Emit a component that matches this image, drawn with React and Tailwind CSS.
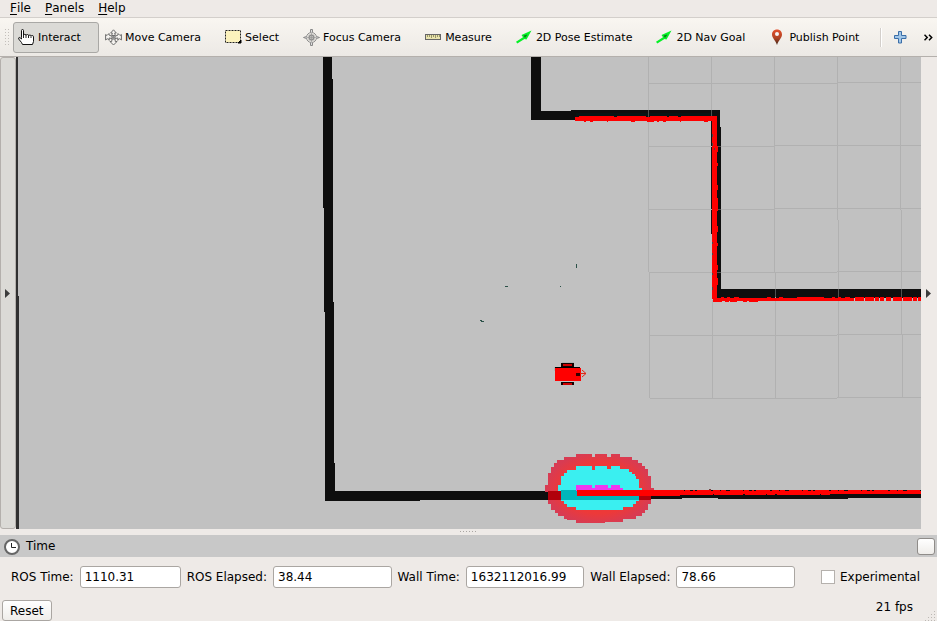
import React from "react";

function HandIcon() {
  return (
    <svg width="17" height="17" viewBox="0 0 17 17" shapeRendering="geometricPrecision">
      <path d="M3.5 8.5V1.5Q3.5.5 4.5.5T5.5 1.5V6.5Q5.5 5.3 6.8 5.3T8 6.5Q8.2 5.5 9.4 5.5T10.6 6.8Q11 6 12 6T13 7.2Q13.3 6.5 14.3 6.5T15.5 7.8V12.5L14.5 15.5H4.5L3.5 13.5L.7 10Q.3 8.4 1.8 8.5L3.5 10Z" fill="#fff" stroke="#111" strokeWidth="1" strokeLinejoin="round" />
      <path d="M5.5 6V9M8 6.5V9M10.5 7V9M13 7.5V9" stroke="#222" strokeWidth="1" />
    </svg>
  );
}

function MoveIcon() {
  return (
    <svg width="17" height="17" viewBox="0 0 17 17">
      <g fill="#f5f3f0" stroke="#6c6c6c" strokeWidth="1" strokeLinejoin="round">
        <path d="M7 10H10L10.3 12.5H12L8.5 16L5 12.5H6.7Z" />
        <path d="M.6 5.5L2 6.5L4 4.5V6L7 7.3V9.5L4 9L4.3 11.3L2.3 9.7L.6 11Z" />
        <path d="M16.400 5.5L15 6.500L13 4.500V6L10 7.300V9.500L13 9L12.700 11.300L14.700 9.700L16.400 11Z" />
        <path d="M8.500 .8L11.300 4H9.700L10.300 6.500H6.700L7.300 4H5.700Z" />
      </g>
      <circle cx="8.500" cy="8.300" r="1.500" fill="#888" />
    </svg>
  );
}

function SelectIcon() {
  return (
    <svg width="17" height="17" viewBox="0 0 17 17">
      <rect x=".5" y="1.5" width="15" height="12" fill="#fcf2bd" stroke="#222" strokeDasharray="2 1" />
      <path d="M16 11V14H13Z" fill="#000" stroke="#000" />
    </svg>
  );
}

function FocusIcon() {
  return (
    <svg width="17" height="17" viewBox="0 0 17 17" fill="none" stroke="#888">
      <circle cx="8.5" cy="8.5" r="5" />
      <circle cx="8.5" cy="8.5" r="2.5" />
      <path d="M8.5 3V14M3 8.5H14M7 5V12M10 5V12M5 7H12M5 10H12" strokeWidth=".6" />
      <path d="M7.5 3.5V.5H9.5V3.5M7.5 13.5V16.5H9.5V13.5M3.5 7.5L.5 8.5L3.5 9.5M13.5 7.5L16.5 8.5L13.5 9.5" fill="#ddd" />
    </svg>
  );
}

function RulerIcon() {
  return (
    <svg width="17" height="17" viewBox="0 0 17 17" shapeRendering="crispEdges">
      <rect x=".5" y="5.5" width="15" height="5" fill="#e9e4ad" stroke="#666" />
      <path d="M2.5 6V8M4.5 6V8M6.5 6V9M8.5 6V8M10.5 6V9M12.5 6V8M14.5 6V8" stroke="#999669" />
    </svg>
  );
}

function ArrowIcon() {
  return (
    <svg width="17" height="17" viewBox="0 0 17 17">
      <path d="M15.5 1.5L5.5 6L7 8.3L0 12.7L1.3 14.5L8.500 10L10.500 10.500Z" fill="#08f028" />
      <path d="M7.500 6.500L11.500 5.500L9 9Z" fill="#087d1b" />
    </svg>
  );
}

function PinIcon() {
  return (
    <svg width="17" height="17" viewBox="0 0 17 17">
      <defs>
        <linearGradient id="pin" x1="0" y1="0" x2="0" y2="1">
          <stop offset="0" stopColor="#e34f2c" />
          <stop offset=".55" stopColor="#b04324" />
          <stop offset="1" stopColor="#3c2416" />
        </linearGradient>
      </defs>
      <path d="M8 .5C4.8.5 3 2.7 3 5.6C3 9 6.4 11.5 8 16C9.6 11.5 13 9 13 5.6C13 2.7 11.2.5 8 .5Z" fill="url(#pin)" />
      <circle cx="8" cy="5" r="2" fill="#f4f4f4" />
    </svg>
  );
}

const tools = [
  ["Interact", HandIcon],
  ["Move Camera", MoveIcon],
  ["Select", SelectIcon],
  ["Focus Camera", FocusIcon],
  ["Measure", RulerIcon],
  ["2D Pose Estimate", ArrowIcon],
  ["2D Nav Goal", ArrowIcon],
  ["Publish Point", PinIcon],
];

function Toolbar() {
  return (
    <div className="flex h-[39px] shrink-0 items-center overflow-hidden border-b border-[#b4b0ac] bg-linear-to-b from-[#f9f6f1] to-[#ece9e5] text-[11px]">
      <svg className="mr-[3px] ml-[5px] shrink-0" width="5" height="17" shapeRendering="crispEdges">
        <path d="M.5 0V17M3.5 0V17" stroke="#c3bfbb" strokeDasharray="1 2" />
      </svg>
      <div className="flex items-center gap-px">
        {tools.map(([name, Icon], i) => (
          <button
            key={name}
            aria-pressed={i === 0}
            className={
              "flex h-[31px] shrink-0 items-center rounded-[3px] border pr-[17px] pl-1 whitespace-nowrap " +
              (i === 0 ? "border-[#a9a8a5] bg-[#dbdad6]" : "border-transparent")
            }
          >
            <span className="mr-1 w-4"><Icon /></span>
            <span className="pt-[2px]">{name}</span>
          </button>
        ))}
      </div>
      <div className="ml-[3px] h-[19px] w-px shrink-0 bg-[#d3cfcb]" />
      <div className="h-[19px] w-px shrink-0 bg-white" />
      <button aria-label="Add tool" className="ml-3 shrink-0">
        <svg width="13" height="13" viewBox="0 0 13 13">
          <path d="M4.5.5H7.5V4.5H12V7.5H7.5V12H4.5V7.5H.5V4.5H4.5Z" fill="#a1c6e8" stroke="#3a6ea8" strokeLinejoin="round" />
        </svg>
      </button>
      <button aria-label="More tools" className="mr-1 ml-auto shrink-0">
        <svg width="9" height="7" viewBox="0 0 9 7" fill="none" stroke="#000" strokeWidth="1.5">
          <path d="M.5.8L3.2 3.5L.5 6.2M5 .8L7.7 3.5L5 6.2" />
        </svg>
      </button>
    </div>
  );
}

function MapView() {
  return (
    <svg className="min-w-0 flex-1 bg-[#c1c1c1]" viewBox="16 57 905 472" preserveAspectRatio="xMidYMid slice" shapeRendering="crispEdges">
      <defs>
        <radialGradient id="inflation" gradientUnits="userSpaceOnUse" cx="238" cy="145" r="160" gradientTransform="translate(0 47) scale(1 .675)">
          <stop offset=".7" stopColor="#ed3939" />
          <stop offset="1" stopColor="#d83b52" />
        </radialGradient>
      </defs>
      <rect x="16" y="57" width="905" height="472" fill="#c1c1c1" />
      <path d="M16 57H18V296H19V529H16Z" fill="#303030" />

      {/* static map walls */}
      <g fill="#0e0e0e">
        <path d="M323 57H332V79H333V302H334V463H335V491H650V490H921V498H848V499H718V498H682V499H650V500H420V501H325V312H324V208H323Z" />
        <path d="M531 57H541V111H571V110H720V127H721V289H921V298H712V234H711V120H531Z" />
      </g>
      <path d="M576 113H713V117H576Z" fill="#081414" />

      {/* one metre grid */}
      <g stroke="#b1b1b1">
        <path d="M648.5 57V272M649.5 272V398M711.5 57V120M712.5 300V398M774.5 57V272M775.5 272V398M837.5 57V220M838.5 220V398M900.5 57V210M901.5 210V334M902.5 334V398" />
        <path d="M649 83.5H837M837 82.5H921M649 146.5H775M775 145.5H921M649 209.5H775M775 208.5H921M649 272.5H837M837 271.5H921M650 335.5H837M837 334.5H921M650 398.5H837M837 397.5H921" />
      </g>
      <path d="M648.5 110V119M711.5 110V119M775.5 289V297M838.5 289V297M901.5 289V297M717 146.5H721M717 209.5H721M717 272.5H721" stroke="#515151" />

      {/* local costmap, drawn in thirds of a pixel */}
      <g transform="translate(520 440) scale(.333333)">
        <path fill="url(#inflation)" d="M168 42H216V51H225V42H261V51H273V42H300V51H336V60H354V69H366V78H375V87H384V108H393V144H402V153H393V192H384V210H375V219H366V228H348V237H309V246H255V249H168V240H141V237H132V228H114V219H105V210H93V192H84V156H75V135H84V99H93V81H102V69H111V60H132V51H168Z" />
        <path fill="#b1000b" d="M84 153H393V180H84Z" />
        <path fill="#3aeff0" d="M168 78H216V90H225V78H261V87H273V78H300V87H327V96H336V102H345V108H348V117H357V144H366V153H357V183H348V192H339V201H309V210H168V201H141V192H132V183H123V153H114V135H123V108H132V99H141V90H168Z" />
        <path fill="#00b7ba" d="M123 150H357V180H123Z" />
        <path fill="#ed38ef" d="M168 135H216V144H225V135H264V144H273V135H300V144H309V153H168Z" />
        <path fill="#f00" d="M171 150H480V167H171Z" />
      </g>

      {/* laser scan */}
      <g fill="none" stroke="#f00">
        <path d="M575 118.500H716" strokeWidth="4" />
        <path d="M579 116.500H716" strokeWidth="1" strokeDasharray="35 3 29 4 17 2 9 3" />
        <path d="M584 121.500H712" strokeWidth="1" strokeDasharray="2 4 3 14 1 23 4 12 7 3" />
        <path d="M714.500 116V299" strokeWidth="5" />
        <path d="M717.500 146V285" strokeDasharray="6 11 3 19 5 8 13 15" />
        <path d="M713 299.500H854" strokeWidth="3" />
        <path d="M855 299H921" strokeWidth="4" strokeDasharray="9 1 9 1 4 1 4 2 5 2" />
        <path d="M713 301.500H759" strokeDasharray="9 3 4 1 7 6 4 2" />
        <path d="M721 297.500H855" strokeDasharray="3 3 3 4 5 28 4 8 4 14 27 8" />
        <path d="M638 492.500H921" strokeWidth="3" />
        <path d="M638 490.500H921" strokeDasharray="14 2 7 1 5 4 13 1 5 3 2 2" />
        <path d="M638 494.500H830" strokeDasharray="21 1 8 2 43 1 29 2" />
      </g>
      <path d="M712.500 134V137M712.500 143V146M714.500 148V150M712.500 242V244M712.500 253V255M712.500 273V275M712.500 287V290" stroke="#5a4040" />
      <path d="M709 489H711V490H709Z" fill="#713c3c" />

      {/* robot */}
      <g>
        <path d="M562 362H574V363H562ZM554 367H555V371H554Z" fill="#aeb4b4" />
        <path d="M561 363H574V367H561ZM561 382H574V385H561Z" fill="#100" />
        <path d="M563 364H572V366H563ZM563 383H572V385H563Z" fill="#c00" />
        <path d="M555 367H580V368H555Z" fill="#000" />
        <path d="M555 368H581V381H555Z" fill="#f00" />
        <path d="M576 373H580V376H576Z" fill="#300" />
        <path d="M580 373.500H586M582 370L586 373.500L582 377" fill="none" stroke="#e12818" shapeRendering="auto" />
      </g>
      <path d="M576 264L577 268M505 286.500H508M560 286.500H561M480 320.500H482M481 321.500H484" stroke="#2b5148" />
    </svg>
  );
}

function TimeField({ id, label, value, width }) {
  return (
    <>
      <label htmlFor={id} className="shrink-0 whitespace-nowrap">{label}</label>
      <input
        id={id}
        readOnly
        defaultValue={value}
        className={"h-[22px] min-w-0 rounded-[3px] border border-[#aaa6a2] bg-white px-1 text-black outline-none " + width}
      />
    </>
  );
}

function TimePanel() {
  return (
    <section>
      <header className="flex h-[22px] items-center bg-[#c8c8c8] pr-[2px] pl-1">
        <svg className="mt-[2px]" width="16" height="16" viewBox="0 0 16 16" fill="none">
          <circle cx="8" cy="8" r="7" fill="#fff" stroke="#666" strokeWidth="2" />
          <path d="M7.500 4V8.500H12" stroke="#222" />
        </svg>
        <h2 className="ml-[6px]">Time</h2>
        <button aria-label="Close panel" className="ml-auto h-[17px] w-[18px] rounded-[3px] border border-[#8f8c89] bg-linear-to-b from-white to-[#efedea]" />
      </header>
      <div className="flex items-center gap-[6px] pt-[9px] pr-[17px] pl-[11px]">
        <TimeField id="ros-time" label="ROS Time:" value="1110.31" width="w-[101px]" />
        <TimeField id="ros-elapsed" label="ROS Elapsed:" value="38.44" width="flex-1" />
        <TimeField id="wall-time" label="Wall Time:" value="1632112016.99" width="flex-1" />
        <TimeField id="wall-elapsed" label="Wall Elapsed:" value="78.66" width="flex-1" />
        <label className="ml-5 flex shrink-0 items-center gap-[5px]">
          <input type="checkbox" className="h-[14px] w-[14px] appearance-none border border-[#b5b1ad] bg-white" />
          Experimental
        </label>
      </div>
      <footer className="relative flex items-start justify-between pt-3 pr-6 pl-[2px]">
        <button className="h-[21px] rounded-[3px] border border-[#aaa6a2] bg-linear-to-b from-white to-[#efedea] px-[7px]">Reset</button>
        <output className="leading-[14px]">21 fps</output>
        <svg className="absolute right-[2px] bottom-0" width="10" height="10" shapeRendering="crispEdges">
          <path d="M9.500 0V10M6.500 3V10M3.500 6V10M.500 9V10" stroke="#bcb8b4" strokeDasharray="1 2" />
        </svg>
      </footer>
    </section>
  );
}

export default function App() {
  return (
    <div className="flex h-screen flex-col overflow-hidden bg-[#eeeae7] font-['DejaVu_Sans',sans-serif] text-[12px] leading-4 text-black">
      <nav className="flex h-[18px] shrink-0 gap-[14px] border-b border-[#d3cfcb] pl-[10px]">
        {["File", "Panels", "Help"].map((name) => (
          <button key={name} className="flex h-4 items-center">
            <span className="underline underline-offset-2">{name[0]}</span>
            {name.slice(1)}
          </button>
        ))}
      </nav>
      <Toolbar />
      <main className="flex min-h-0 flex-1">
        <button aria-label="Show left panel" className="flex w-4 shrink-0 items-center justify-center rounded-[3px] border border-[#b4b0ac] bg-[#dbdad6]">
          <svg width="6" height="9"><path d="M0 0L5 4.500L0 9Z" fill="#3c3c3c" /></svg>
        </button>
        <MapView />
        <button aria-label="Show right panel" className="flex w-4 shrink-0 items-center justify-center">
          <svg width="6" height="9"><path d="M0 0L5 4.500L0 9Z" fill="#3c3c3c" /></svg>
        </button>
      </main>
      <div className="flex h-[6px] shrink-0 items-center justify-center">
        <svg width="17" height="2" shapeRendering="crispEdges"><path d="M0 .500H17" stroke="#aaa6a2" strokeDasharray="1 2" /></svg>
      </div>
      <TimePanel />
    </div>
  );
}
